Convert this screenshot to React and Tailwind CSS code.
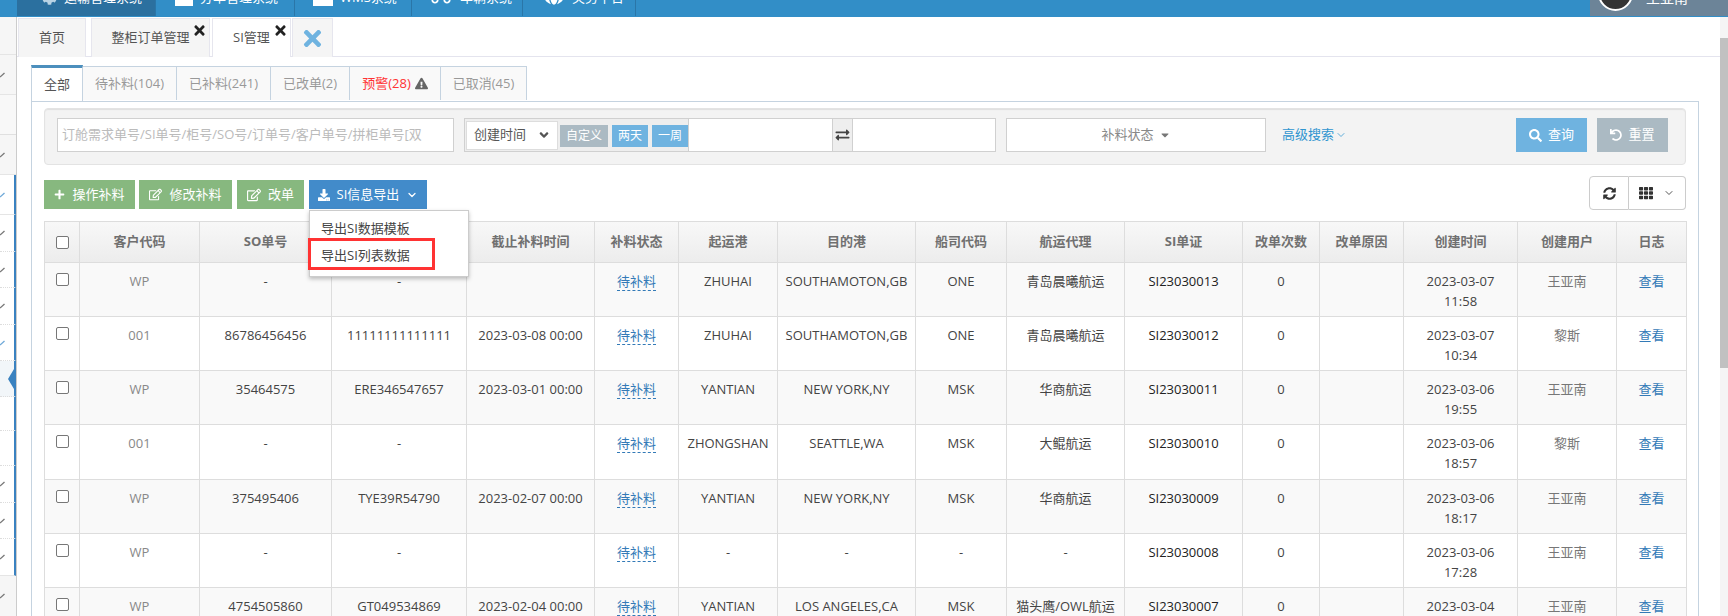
import React from 'react'
import { ChevronDown } from 'lucide-react'
import {
  FaTimes, FaPlus, FaRegEdit, FaDownload, FaSearch, FaUndo, FaSyncAlt, FaTh,
  FaExchangeAlt, FaExclamationTriangle, FaAngleDown, FaCaretDown, FaCog, FaTruck, FaGlobe,
} from 'react-icons/fa'

const sub = 'bg-white border-b [border-bottom-style:dotted] border-b-[#ddd] border-r-2 border-r-[#3a82c0]'

const sideRows = [
  { h: 'h-[38px]', bg: 'bg-[#f6f6f6] border-b border-[#e5e5e5]' },
  { h: 'h-[40px]', bg: 'bg-[#f6f6f6] border-b border-[#e5e5e5]', tick: true },
  { h: 'h-[40px]', bg: 'bg-[#f8f8f8] border-b border-[#e0e0e0]' },
  { h: 'h-[40px]', bg: 'bg-[#f6f6f6] border-b border-[#e5e5e5]', tick: true },
  { h: 'h-[40px]', bg: 'bg-white border-b border-b-[#e5e5e5] border-r-2 border-r-[#3a82c0]', tick: true, blue: true },
  { h: 'h-[37px]', bg: sub, tick: true },
  { h: 'h-[36px]', bg: sub, tick: true },
  { h: 'h-[37px]', bg: sub, tick: true },
  { h: 'h-[36px]', bg: sub, tick: true, blue: true },
  { h: 'h-[36px]', bg: 'bg-[#f2f6f9] border-b [border-bottom-style:dotted] border-b-[#ddd] border-r-2 border-r-[#3a82c0]', arrow: true },
  { h: 'h-[34px]', bg: sub },
  { h: 'h-[35px]', bg: sub },
  { h: 'h-[37px]', bg: sub, tick: true },
  { h: 'h-[36px]', bg: sub, tick: true },
  { h: 'h-[37px]', bg: 'bg-white border-b border-b-[#e5e5e5] border-r-2 border-r-[#3a82c0]', tick: true },
  { h: 'h-[40px]', bg: 'bg-[#f6f6f6]', tick: true },
]

const rows = [
  ['WP', '-', '-', '', 'ZHUHAI', 'SOUTHAMOTON,GB', 'ONE', '青岛晨曦航运', 'SI23030013', '2023-03-07', '11:58', '王亚南'],
  ['001', '86786456456', '11111111111111', '2023-03-08 00:00', 'ZHUHAI', 'SOUTHAMOTON,GB', 'ONE', '青岛晨曦航运', 'SI23030012', '2023-03-07', '10:34', '黎斯'],
  ['WP', '35464575', 'ERE346547657', '2023-03-01 00:00', 'YANTIAN', 'NEW YORK,NY', 'MSK', '华商航运', 'SI23030011', '2023-03-06', '19:55', '王亚南'],
  ['001', '-', '-', '', 'ZHONGSHAN', 'SEATTLE,WA', 'MSK', '大鲲航运', 'SI23030010', '2023-03-06', '18:57', '黎斯'],
  ['WP', '375495406', 'TYE39R54790', '2023-02-07 00:00', 'YANTIAN', 'NEW YORK,NY', 'MSK', '华商航运', 'SI23030009', '2023-03-06', '18:17', '王亚南'],
  ['WP', '-', '-', '', '-', '-', '-', '-', 'SI23030008', '2023-03-06', '17:28', '王亚南'],
  ['WP', '4754505860', 'GT049534869', '2023-02-04 00:00', 'YANTIAN', 'LOS ANGELES,CA', 'MSK', '猫头鹰/OWL航运', 'SI23030007', '2023-03-04', '', '王亚南'],
]

const rowHeights = ['h-[54px]', 'h-[54px]', 'h-[54px]', 'h-[55px]', 'h-[54px]', 'h-[54px]', 'h-[54px]']

const NavItem = ({ icon, label, active, w }) => (
  <div className={`${w} h-[16px] flex items-start gap-[7px] border-r border-[#2a76a8] overflow-hidden ${active ? 'bg-[#2b709f]' : ''}`}>
    {icon}
    <span className="-mt-[9px] text-white text-[13px] leading-[13px] whitespace-nowrap">{label}</span>
  </div>
)

const ActionBtn = ({ w, icon, label, cls = 'bg-[#87b87f]' }) => (
  <button className={`${w} ${cls} h-[29px] flex items-center justify-center gap-[7px] text-white text-[13px]`}>
    {icon}
    {label}
  </button>
)

const TopTab = ({ w, active, label, close, gap }) => (
  <div className={`${w} ${gap} relative h-[39px] flex items-center justify-center border border-b-0 border-[#e6e6ee] text-[13px] text-[#555] ${active ? 'bg-white' : 'bg-[#f5f5f5]'}`}>
    {label}
    {close && <FaTimes className="absolute right-[2px] top-[4px] w-[15px] h-[15px] text-[#222]" />}
  </div>
)

const InnerTab = ({ w, children, active }) => (
  <div className={`${w} flex items-center justify-center text-[13px] border-r border-[#c5d3e0] ${active ? 'h-[36px] -mt-[1px] -mb-[1px] relative bg-white text-[#555] border-t-[3px] border-t-[#4c8fbd] border-l border-l-[#c5d3e0]' : 'h-[34px] border-t border-[#c5d3e0] bg-[#f9f9f9] text-[#999]'}`}>
    {children}
  </div>
)

const App = () => {
  return (
    <div className="w-[1728px] h-[616px] overflow-hidden bg-white font-['Open_Sans','Noto_Sans_CJK_SC',sans-serif]">
      <div className="h-[17px] bg-[#328ec7] flex items-start pl-[17px] overflow-hidden">
        <NavItem w="w-[139px] pl-[25px]" active label="运输管理系统" icon={<FaCog className="w-[15px] h-[15px] text-[#b9d3e4] shrink-0 -mt-[10px]" />} />
        <NavItem w="w-[139px] pl-[19px]" label="分单管理系统" icon={<span className="block w-[18px] h-[20px] bg-white shrink-0 -mt-[14px]" />} />
        <NavItem w="w-[117px] pl-[18px]" label="WMS系统" icon={<span className="block w-[20px] h-[20px] bg-white shrink-0 -mt-[14px]" />} />
        <NavItem w="w-[111px] pl-[17px]" label="车辆系统" icon={<FaTruck className="w-[24px] h-[24px] text-white shrink-0 -mt-[18px]" />} />
        <NavItem w="w-[113px] pl-[20px]" label="关务平台" icon={<FaGlobe className="w-[22px] h-[22px] text-white shrink-0 -mt-[17px]" />} />
        <div className="ml-auto w-[138px] h-[16px] bg-[#6c8498] flex items-start pl-[8px] gap-[13px] overflow-hidden">
          <span className="block w-[35px] h-[35px] shrink-0 rounded-full bg-[#333] border-2 border-white -mt-[24px]" />
          <span className="text-white text-[14px] leading-[14px] -mt-[9px]">王亚南</span>
        </div>
      </div>

      <div className="flex h-[599px]">
        <div className="w-[17px] shrink-0 border-r border-[#ccc] overflow-hidden">
          {sideRows.map((r, i) => (
            <div key={i} className={`${r.h} ${r.bg} relative flex items-center`}>
              {r.tick && (
                <svg width="5" height="6" viewBox="0 0 5 6" className={r.blue ? 'text-[#6ea8d8]' : 'text-[#777]'}>
                  <path d="M0 5 L4.5 1" stroke="currentColor" strokeWidth="1.3" fill="none" />
                </svg>
              )}
              {r.arrow && (
                <svg width="6" height="20" viewBox="0 0 6 20" className="absolute left-[8px] top-[8px] text-[#3a82c0]">
                  <path d="M6 0 V20 L0 10 Z" fill="currentColor" />
                </svg>
              )}
            </div>
          ))}
        </div>

        <div className="flex-1 min-w-0">
          <div className="h-[40px] pt-px pl-px flex items-start border-b border-[#e4e4ee]">
            <TopTab w="w-[68px]" label="首页" />
            <TopTab w="w-[119px]" gap="ml-[5px]" label="整柜订单管理" close />
            <TopTab w="w-[79px]" gap="ml-[2px]" active label="SI管理" close />
            <div className="w-[41px] ml-px h-[39px] flex items-center justify-center bg-[#f5f5f5] border border-b-0 border-[#e6e6ee]">
              <FaTimes className="w-[25px] h-[25px] text-[#6fb3e0]" />
            </div>
          </div>

          <div className="pl-[14px] pr-[21px] pt-[9px]">
            <div className="flex h-[35px] relative z-10 items-start">
              <InnerTab w="w-[52px]" active>全部</InnerTab>
              <InnerTab w="w-[94px]">待补料(104)</InnerTab>
              <InnerTab w="w-[94px]">已补料(241)</InnerTab>
              <InnerTab w="w-[79px]">已改单(2)</InnerTab>
              <InnerTab w="w-[91px]">
                <span className="text-[#f33]">预警(28)</span>
                <FaExclamationTriangle className="ml-[4px] w-[13px] h-[13px] text-[#666]" />
              </InnerTab>
              <InnerTab w="w-[86px]">已取消(45)</InnerTab>
            </div>

            <div className="border border-[#c5d3e0] h-[560px] px-[12px] pt-[6px]">
              <div className="h-[57px] bg-[#f3f3f3] border border-[#e3e3e3] rounded-[4px] shadow-[inset_0_1px_1px_rgba(0,0,0,0.08)] flex items-start pt-[9px] pl-[12px]">
                <div className="w-[397px] h-[34px] bg-white border border-[#d0d0d0] flex items-center pl-[4px] text-[13px] text-[#bbb] whitespace-nowrap overflow-hidden">
                  订舱需求单号/SI单号/柜号/SO号/订单号/客户单号/拼柜单号[双
                </div>
                <div className="ml-[10px] w-[225px] h-[34px] bg-[#eee] border border-[#d0d0d0] flex items-center pl-[1px] shrink-0">
                  <div className="w-[92px] h-[29px] bg-white border border-[#ddd] flex items-center justify-between pl-[7px] pr-[6px] text-[13px] text-[#555]">
                    创建时间
                    <FaAngleDown className="w-[14px] h-[14px] text-[#555]" />
                  </div>
                  <span className="ml-[2px] mt-[2px] w-[48px] h-[22px] bg-[#abbac3] text-white text-[12px] flex items-center justify-center">自定义</span>
                  <span className="ml-[4px] mt-[2px] w-[36px] h-[22px] bg-[#6fb3e0] text-white text-[12px] flex items-center justify-center">两天</span>
                  <span className="ml-[4px] mt-[2px] w-[36px] h-[22px] bg-[#6fb3e0] text-white text-[12px] flex items-center justify-center">一周</span>
                </div>
                <div className="w-[144px] h-[34px] bg-white border border-l-0 border-[#d0d0d0]" />
                <div className="w-[20px] h-[34px] bg-[#eee] border-y border-r border-[#d0d0d0] flex items-center justify-center">
                  <FaExchangeAlt className="w-[15px] h-[14px] text-[#444]" />
                </div>
                <div className="w-[143px] h-[34px] bg-white border border-l-0 border-[#d0d0d0]" />
                <div className="ml-[10px] w-[260px] h-[34px] bg-white border border-[#d0d0d0] flex items-center justify-center gap-[5px] text-[13px] text-[#888]">
                  补料状态
                  <FaCaretDown className="w-[12px] h-[12px] text-[#777]" />
                </div>
                <div className="ml-[16px] h-[34px] flex items-center text-[13px] text-[#2f95d0]">
                  高级搜索
                  <ChevronDown className="w-[12px] h-[12px] ml-[1px]" strokeWidth={1.5} />
                </div>
                <button className="ml-auto w-[71px] h-[34px] bg-[#6fb3e0] text-white text-[13px] flex items-center justify-center gap-[6px]">
                  <FaSearch className="w-[13px] h-[13px]" />查询
                </button>
                <button className="ml-[10px] mr-[17px] w-[71px] h-[34px] bg-[#abbac3] text-white text-[13px] flex items-center justify-center gap-[6px]">
                  <FaUndo className="w-[12px] h-[12px]" />重置
                </button>
              </div>

              <div className="mt-[11px] h-[45px] flex items-start relative">
                <div className="flex gap-[4px] mt-[4px]">
                  <ActionBtn w="w-[91px]" icon={<FaPlus className="w-[11px] h-[11px]" />} label="操作补料" />
                  <ActionBtn w="w-[93px]" icon={<FaRegEdit className="w-[13px] h-[13px]" />} label="修改补料" />
                  <ActionBtn w="w-[67px] ml-px" icon={<FaRegEdit className="w-[14px] h-[14px]" />} label="改单" />
                  <div className="relative ml-px">
                    <ActionBtn w="w-[118px]" cls="bg-[#428bca]" icon={<FaDownload className="w-[12px] h-[12px]" />} label={<>SI信息导出<ChevronDown className="w-[12px] h-[12px] text-white" strokeWidth={2.5} /></>} />
                    <div className="absolute z-20 left-0 top-[30px] w-[160px] h-[67px] bg-white border border-[#ccc] shadow-[0_2px_4px_rgba(0,0,0,0.25)] text-[13px] text-[#444] pl-[11px] pt-[7px] leading-[20px]">
                      <div>导出SI数据模板</div>
                      <div className="mt-[7px]">导出SI列表数据</div>
                      <div className="absolute -left-[2px] top-[27px] w-[127px] h-[32px] border-[3px] border-[#f33]" />
                    </div>
                  </div>
                </div>
                <div className="ml-auto flex h-[34px]">
                  <div className="w-[40px] border border-[#ccc] rounded-l-[4px] flex items-center justify-center bg-white">
                    <FaSyncAlt className="w-[13px] h-[13px] text-[#333]" />
                  </div>
                  <div className="w-[57px] border border-l-0 border-[#ccc] rounded-r-[4px] flex items-center justify-center gap-[10px] bg-white">
                    <FaTh className="w-[14px] h-[14px] text-[#333]" />
                    <ChevronDown className="w-[12px] h-[12px] text-[#555]" strokeWidth={2} />
                  </div>
                </div>
              </div>

              <table className="table-fixed border-collapse w-[1642px] text-[13px] text-center text-[#444]">
                <colgroup>
                  {['w-[35px]', 'w-[120px]', 'w-[132px]', 'w-[135px]', 'w-[128px]', 'w-[84px]', 'w-[99px]', 'w-[138px]', 'w-[91px]', 'w-[118px]', 'w-[118px]', 'w-[77px]', 'w-[84px]', 'w-[114px]', 'w-[99px]', 'w-[70px]'].map((c, i) => (
                    <col key={i} className={c} />
                  ))}
                </colgroup>
                <thead>
                  <tr className="h-[41px] bg-gradient-to-b from-[#f8f8f8] to-[#ececec] text-[#707070]">
                    <th className="border border-[#ddd]">
                      <span className="block w-[13px] h-[13px] mx-auto border border-[#777] rounded-[2px] bg-white" />
                    </th>
                    {['客户代码', 'SO单号', '', '截止补料时间', '补料状态', '起运港', '目的港', '船司代码', '航运代理', 'SI单证', '改单次数', '改单原因', '创建时间', '创建用户', '日志'].map((h, i) => (
                      <th key={i} className="border border-[#ddd] font-bold">{h}</th>
                    ))}
                  </tr>
                </thead>
                <tbody>
                  {rows.map((r, i) => (
                    <tr key={i} className={`${rowHeights[i]} ${i % 2 === 0 ? 'bg-[#f9f9f9]' : 'bg-white'}`}>
                      <td className="border border-[#ddd] align-top pt-[9px]">
                        <span className="block w-[13px] h-[13px] mx-auto mt-[1px] border border-[#777] rounded-[2px] bg-white" />
                      </td>
                      <td className="border border-[#ddd] align-top pt-[8px] leading-[20px] text-[#888]">{r[0]}</td>
                      <td className="border border-[#ddd] align-top pt-[8px] leading-[20px]">{r[1]}</td>
                      <td className="border border-[#ddd] align-top pt-[8px] leading-[20px]">{r[2]}</td>
                      <td className="border border-[#ddd] align-top pt-[8px] leading-[20px]">{r[3]}</td>
                      <td className="border border-[#ddd] align-top pt-[8px] leading-[20px]">
                        <span className="text-[#337ab7] border-b border-dashed border-[#337ab7]">待补料</span>
                      </td>
                      <td className="border border-[#ddd] align-top pt-[8px] leading-[20px]">{r[4]}</td>
                      <td className="border border-[#ddd] align-top pt-[8px] leading-[20px]">{r[5]}</td>
                      <td className="border border-[#ddd] align-top pt-[8px] leading-[20px]">{r[6]}</td>
                      <td className="border border-[#ddd] align-top pt-[8px] leading-[20px]">{r[7]}</td>
                      <td className="border border-[#ddd] align-top pt-[8px] leading-[20px] text-[#222]">{r[8]}</td>
                      <td className="border border-[#ddd] align-top pt-[8px] leading-[20px]">0</td>
                      <td className="border border-[#ddd] align-top pt-[8px] leading-[20px]"></td>
                      <td className="border border-[#ddd] align-top pt-[8px] leading-[20px]">
                        {r[9]}
                        <br />
                        {r[10]}
                      </td>
                      <td className="border border-[#ddd] align-top pt-[8px] leading-[20px] text-[#777]">{r[11]}</td>
                      <td className="border border-[#ddd] align-top pt-[8px] leading-[20px] text-[#337ab7]">查看</td>
                    </tr>
                  ))}
                </tbody>
              </table>
            </div>
          </div>
        </div>

        <div className="w-[8px] shrink-0 bg-[#f5f5f5] pt-[21px] flex flex-col">
          <div className="h-[330px] bg-[#c1c1c1]" />
        </div>
      </div>
    </div>
  )
}

export default App
